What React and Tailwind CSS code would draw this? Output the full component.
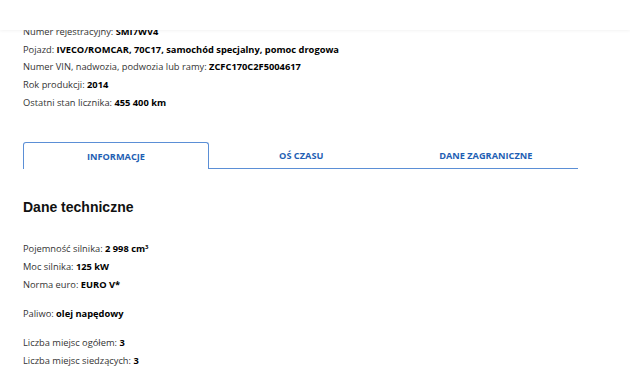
export default function App() {
  const font = { fontFamily: '"Open Sans", sans-serif' };
  const Row = ({ label, value }) => (
    <div className="h-[17.7px] leading-[17.7px]">
      {label}: <b className="font-bold text-black">{value}</b>
    </div>
  );
  return (
    <div className="relative w-[630px] h-[370px] overflow-hidden bg-white text-[9.3px] text-[#333]" style={font}>
      <div className="absolute top-0 left-0 right-0 h-[30px] bg-white shadow-[0_1px_3px_rgba(0,0,0,0.05)] z-10" />
      <div className="pl-[23px] pt-[23px]">
        <Row label="Numer rejestracyjny" value="SMI7WV4" />
        <Row label="Pojazd" value="IVECO/ROMCAR, 70C17, samochód specjalny, pomoc drogowa" />
        <Row label="Numer VIN, nadwozia, podwozia lub ramy" value="ZCFC170C2F5004617" />
        <Row label="Rok produkcji" value="2014" />
        <Row label="Ostatni stan licznika" value="455 400 km" />
      </div>
      <div className="ml-[23px] mt-[31px] flex w-[555px] h-[27px] text-[9.2px] font-bold text-[#1f5fb4]">
        <div className="w-[186px] flex items-center justify-center border border-b-0 border-[#5b8fd6] rounded-t-[3px]">INFORMACJE</div>
        <div className="flex-1 flex items-center justify-center border-b border-[#5b8fd6]">OŚ CZASU</div>
        <div className="flex-1 flex items-center justify-center border-b border-[#5b8fd6]">DANE ZAGRANICZNE</div>
      </div>
      <h2 className="pl-[23px] mt-[29px] text-[14px] font-bold text-[#111] leading-[18px]" style={{ fontFamily: '"Liberation Sans", Arial, sans-serif' }}>
        Dane techniczne
      </h2>
      <div className="pl-[23px] mt-[24px]">
        <Row label="Pojemność silnika" value={<>2 998 cm<sup className="text-[6px]">3</sup></>} />
        <Row label="Moc silnika" value="125 kW" />
        <Row label="Norma euro" value="EURO V*" />
        <div className="h-[11px]" />
        <Row label="Paliwo" value="olej napędowy" />
        <div className="h-[12px]" />
        <Row label="Liczba miejsc ogółem" value="3" />
        <Row label="Liczba miejsc siedzących" value="3" />
      </div>
    </div>
  );
}
